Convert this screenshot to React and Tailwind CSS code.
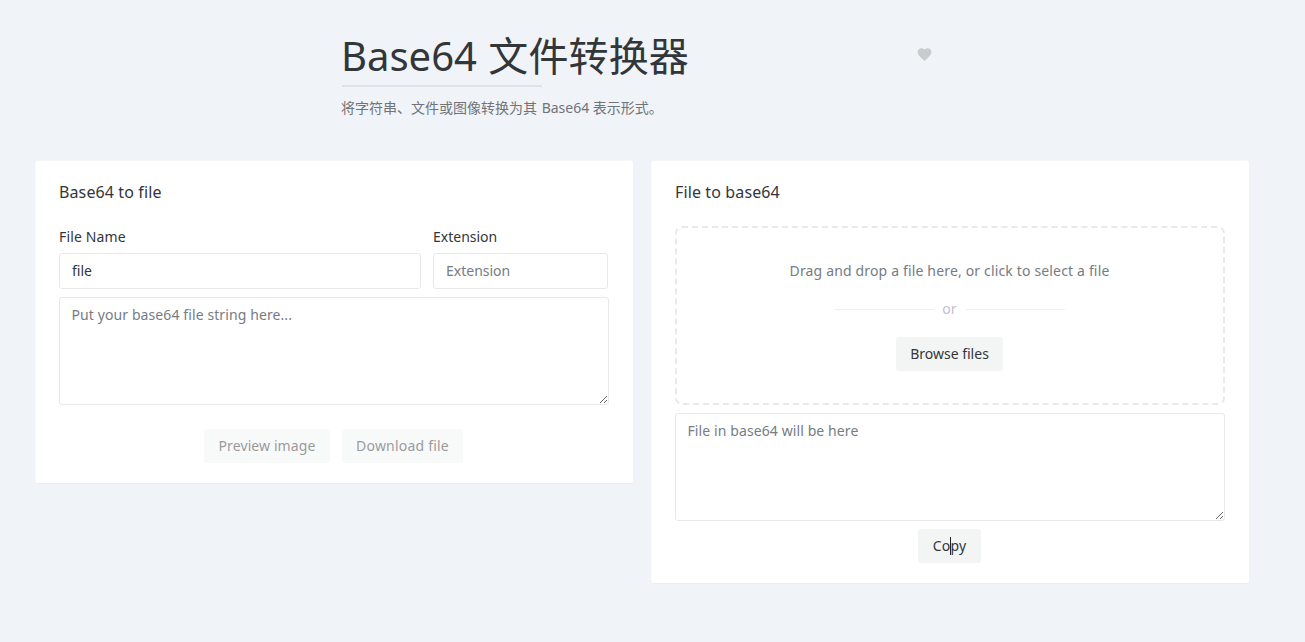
import { IoMdHeart } from "react-icons/io";

const latin = "font-['Noto_Sans','Noto_Sans_CJK_SC',sans-serif]";

function Card({ title, children }) {
  return (
    <section className="w-[599px] rounded-[3px] border border-t-[#f5f6f8] border-r-[#f1f2f4] border-b-[#ecedef] border-l-[#f8f9fa] bg-white px-[23px] pb-5">
      <h2 className="mt-[19px] mb-[22px] h-6 text-base leading-6 whitespace-nowrap tracking-[0.12px] text-[#333639]">
        {title}
      </h2>
      {children}
    </section>
  );
}

function Button({ children, className }) {
  return (
    <button
      className={`flex h-[34px] items-center justify-center rounded-[3px] bg-[#f3f5f5] text-sm whitespace-nowrap text-[#333639] ${className}`}
    >
      {children}
    </button>
  );
}

function TextArea({ placeholder }) {
  return (
    <textarea
      placeholder={placeholder}
      className="block h-[108px] w-[550px] resize rounded-[3px] border border-[#e7e8e9] bg-white px-[11.5px] py-[6px] text-sm leading-[22px] tracking-[0.1px] text-[#333639] outline-none placeholder:text-[#767c82]"
    />
  );
}

export default function App() {
  return (
    <main className={`h-[642px] w-[1305px] overflow-hidden bg-[#f0f3f8] ${latin}`}>
      <header className="ml-[342px] flex h-[160px] w-[600px] justify-between">
        <div className="pt-8">
          <h1 className="-ml-px h-12 text-[40px] leading-[48px] whitespace-nowrap text-[#333639]">
            Base64 <span className="ml-px tracking-[0.1px]">文件转换器</span>
          </h1>
          <div className="mt-[5px] h-[2px] w-[200px] bg-[#dfe3e5]" />
          <p className="mt-[10px] -ml-px text-sm leading-[22px] whitespace-nowrap text-[#707478]">
            将字符串、文件或图像转换为其 <span className="ml-px">Base64</span> 表示形式。
          </p>
        </div>
        <IoMdHeart className="mt-[46px] mr-[9px] size-[17px] text-[#c8ccce]" />
      </header>

      <div className="ml-[35px] flex items-start gap-[17px]">
        <Card title="Base64 to file">
          <div className="flex gap-3 text-sm text-[#333639]">
            <label className="block w-[362px]">
              <span className="block h-[27px] leading-[22px] tracking-[0.15px]">File Name</span>
              <input
                defaultValue="file"
                className="block h-9 w-full rounded-[3px] border border-[#e7e8e9] px-3 pb-[2px] outline-none"
              />
            </label>
            <label className="block w-[175px]">
              <span className="block h-[27px] leading-[22px]">Extension</span>
              <input
                placeholder="Extension"
                className="block h-9 w-full rounded-[3px] border border-[#e7e8e9] px-3 pb-[2px] outline-none placeholder:text-[#767c82]"
              />
            </label>
          </div>
          <div className="mt-2">
            <TextArea placeholder="Put your base64 file string here..." />
          </div>
          <div className="mt-6 mr-0.5 flex justify-center gap-3">
            <Button className="w-[126px] tracking-[0.1px] opacity-50">Preview image</Button>
            <Button className="w-[121px] tracking-[0.2px] opacity-50">Download file</Button>
          </div>
        </Card>

        <Card title="File to base64">
          <div className="flex h-[179px] w-[550px] flex-col items-center rounded-[7px] border-2 border-dashed border-[#e8e9ea] pt-8 pr-px text-sm">
            <p className="h-[22px] leading-[22px] whitespace-nowrap tracking-[0.16px] text-[#767c82]">
              Drag and drop a file here, or click to select a file
            </p>
            <div className="mt-4 flex h-[22px] w-[230px] items-center">
              <span className="h-px flex-1 bg-[#efeff1]" />
              <span className="w-8 text-center leading-[22px] text-[#c0c2cc]">or</span>
              <span className="h-px flex-1 bg-[#efeff1]" />
            </div>
            <Button className="mt-[17px] w-[107px]">Browse files</Button>
          </div>
          <div className="mt-2">
            <TextArea placeholder="File in base64 will be here" />
          </div>
          <div className="mt-2 mr-0.5 flex justify-center">
            <Button className="relative w-[63px] tracking-[0.2px]">
              Copy
              <span className="absolute top-2 left-8 h-[18px] w-px bg-[#222]" />
            </Button>
          </div>
        </Card>
      </div>
    </main>
  );
}
